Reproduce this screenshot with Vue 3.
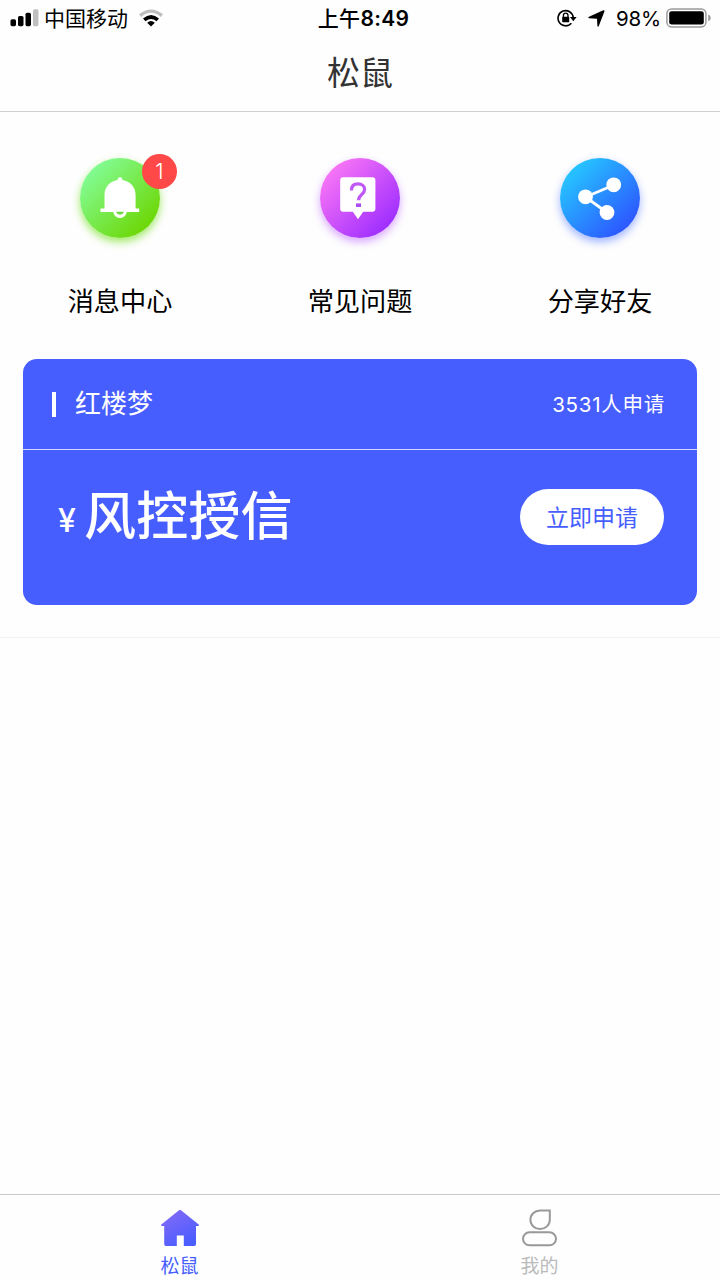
<template>
  <div class="page">
    <header class="status-bar">
      <div class="status-left">
        <svg class="signal" width="29" height="18" viewBox="0 0 29 18">
          <rect x="0.5" y="10.2" width="5.5" height="7" rx="1.6" />
          <rect x="8" y="7" width="5.5" height="10.2" rx="1.6" />
          <rect x="15.5" y="3.7" width="5.5" height="13.5" rx="1.6" />
          <rect x="23" y="0.2" width="5.5" height="17" rx="1.6" fill="#bfbfbf" />
        </svg>
        <span class="carrier">中国移动</span>
        <svg class="wifi" width="24" height="18" viewBox="0 0 24 18">
          <path d="M0 5.2Q12-4.4 24 5.2L21.8 7.9Q12-.2 2.2 7.9z" fill="#bfbfbf" />
          <path d="M4 9.6Q12 2.4 20 9.6L17.5 12.3Q12 7.6 6.5 12.3z" />
          <path d="M8.2 13.8Q12 10.4 15.8 13.8L12 17.6z" />
        </svg>
      </div>
      <div class="time"><span>上午</span>8:49</div>
      <div class="status-right">
        <svg class="lock" width="20" height="18" viewBox="0 0 20 18">
          <path d="M14.4 14.2A7.6 7.6 0 1 1 16.2 8.4" fill="none" stroke="#000" stroke-width="1.6" />
          <path d="M13 8h6.6l-3.3 4.2z" />
          <rect x="5.2" y="7.8" width="7" height="5.4" rx="0.6" />
          <path d="M6.4 8V6.5a2.3 2.3 0 0 1 4.6 0V8" fill="none" stroke="#000" stroke-width="1.3" />
        </svg>
        <svg class="location" width="17" height="17" viewBox="0 0 17 17">
          <path d="M15.3 0.3Q16.8-.1 16.4 1.4L10.8 16Q9.9 17.4 9.4 15.7L9 8.7 1 8.2Q-.4 7.7 1 6.7z" />
        </svg>
        <span class="percent">98%</span>
        <svg class="battery" width="45" height="20" viewBox="0 0 45 20">
          <rect x="0.9" y="0.9" width="39" height="18" rx="4.6" fill="none" stroke="#9b9b9b" stroke-width="1.5" />
          <rect x="3.2" y="3.2" width="34.6" height="13.4" rx="2.4" />
          <path d="M42.2 6.6q2.6 1 2.6 3.3t-2.6 3.3z" fill="#9b9b9b" />
        </svg>
      </div>
    </header>

    <div class="nav-bar">松鼠</div>

    <div class="menu">
      <div v-for="item in menus" :key="item.name" class="menu-item">
        <div class="menu-icon" :class="item.name">
          <svg v-if="item.name === 'message'" width="80" height="80" viewBox="0 0 80 80" fill="#fff">
            <path d="M37.6 21.4q0-2.2 2.4-2.2t2.4 2.2v.5c8 1.2 13.2 7.2 13.2 15V50.5H59.2V54H20.5V50.5h4V36.9c0-7.8 5.2-13.8 13.1-15z" />
            <path d="M33.2 53a6.8 7 0 0 0 13.6 0z" />
            <path d="M36 53.8h8q-1.2 2.9-4 2.9t-4-2.9z" fill="#68d83c" />
          </svg>
          <svg v-else-if="item.name === 'question'" width="80" height="80" viewBox="0 0 80 80">
            <path d="M23.2 19.2h29.2a3 3 0 0 1 3 3v28.6a3 3 0 0 1-3 3h-9.2L38 61.3l-5.2-7.5h-9.6a3 3 0 0 1-3-3V22.2a3 3 0 0 1 3-3z" fill="#fff" />
            <path d="M31.4 32.6c0-4.8 2.6-6.8 6.6-6.8s6.6 2.2 6.6 5.8c0 5-6 5-6 10.6" fill="none" stroke="#bf58f5" stroke-width="3.2" />
            <rect x="36" y="45.4" width="5" height="3.6" fill="#b04cf5" />
          </svg>
          <svg v-else width="80" height="80" viewBox="0 0 80 80" fill="#fff">
            <path d="M54 27L25.5 39 47 54.5" fill="none" stroke="#fff" stroke-width="2.8" />
            <circle cx="53.7" cy="26.8" r="7.4" />
            <circle cx="25.5" cy="38.8" r="7.4" />
            <circle cx="47" cy="54.5" r="7.4" />
          </svg>
          <span v-if="item.badge" class="badge">{{ item.badge }}</span>
        </div>
        <div class="menu-text">{{ item.text }}</div>
      </div>
    </div>

    <div class="card-wrap">
      <div class="card">
        <div class="card-head">
          <div class="card-title">红楼梦</div>
          <div class="card-count">3531人申请</div>
        </div>
        <div class="card-body">
          <div class="amount"><span class="unit">¥</span><span>风控授信</span></div>
          <button class="apply">立即申请</button>
        </div>
      </div>
    </div>

    <footer class="tab-bar">
      <div class="tab" :class="{ active: current === 0 }" @click="current = 0">
        <svg width="40" height="38" viewBox="0 0 40 38">
          <defs>
            <linearGradient id="home" x1="0" y1="0" x2="0.6" y2="1">
              <stop offset="0" stop-color="#8a6cf6" />
              <stop offset="1" stop-color="#4a5dff" />
            </linearGradient>
          </defs>
          <path d="M19 1.2q1-.8 2 0L38.7 15.6q.9 1.2-.5 1.3H36v18.3q0 1.8-1.8 1.8H23.8V26.5h-7V37H6q-1.8 0-1.8-1.8V16.9H1.8q-1.4-.1-.5-1.3z" fill="url(#home)" />
        </svg>
        <span>松鼠</span>
      </div>
      <div class="tab" :class="{ active: current === 1 }" @click="current = 1">
        <svg width="40" height="38" viewBox="0 0 40 38" fill="none" stroke="#999" stroke-width="2">
          <path d="M29.8 1.5H20a9.7 9.3 0 1 0 9.8 9.3z" />
          <rect x="3" y="23.3" width="33" height="13" rx="6.5" />
        </svg>
        <span>我的</span>
      </div>
    </footer>
  </div>
</template>

<script setup>
import { ref } from 'vue'

const current = ref(0)

const menus = [
  { name: 'message', text: '消息中心', badge: 1 },
  { name: 'question', text: '常见问题' },
  { name: 'share', text: '分享好友' }
]
</script>

<style>
body {
  background: #fff;
}
</style>

<style scoped>
.page {
  display: flex;
  flex-direction: column;
  height: 1280px;
  overflow: hidden;
  box-sizing: border-box;
  background: #fefefe;
  color: #000;
  font-family: Inter, "Noto Sans CJK SC", sans-serif;
}

.page svg {
  display: block;
  flex: none;
}

/* 状态栏 */
.status-bar {
  display: flex;
  justify-content: space-between;
  height: 37px;
  padding: 0 9px 0 10px;
  font-size: 21px;
  line-height: 37px;
}

.status-left,
.status-right {
  display: flex;
  align-items: center;
  flex: 1;
}

.status-right {
  justify-content: flex-end;
}

.signal {
  margin-bottom: 1px;
}

.carrier {
  margin-left: 5px;
}

.wifi {
  margin: 0 0 1px 11px;
}

.time {
  padding-left: 6px;
  font-weight: 600;
  letter-spacing: 0.3px;
}

.time span {
  font-weight: 500;
}

.lock,
.location,
.battery {
  margin-bottom: 1px;
}

.location {
  margin-left: 11px;
}

.percent {
  margin: 0 5px 0 11px;
  font-size: 20.5px;
  letter-spacing: -0.2px;
}

/* 标题栏 */
.nav-bar {
  height: 74px;
  border-bottom: 1px solid #d0d0d0;
  color: #333;
  font-size: 33px;
  line-height: 72px;
  text-align: center;
}

/* 菜单 */
.menu {
  display: flex;
  padding-top: 46px;
  height: 201px;
}

.menu-item {
  display: flex;
  flex: 1;
  flex-direction: column;
  align-items: center;
}

.menu-icon {
  position: relative;
  width: 80px;
  height: 80px;
  border-radius: 50%;
}

.message {
  background: linear-gradient(135deg, #84ffa0 8%, #6cd600 88%);
  box-shadow: 0 4px 9px rgba(108, 222, 20, 0.65);
}

.question {
  background: linear-gradient(135deg, #ff7af5 8%, #9c2cff 88%);
  box-shadow: 0 4px 9px rgba(170, 60, 255, 0.45);
}

.share {
  background: linear-gradient(135deg, #25ceff 8%, #2d53ff 88%);
  box-shadow: 0 4px 9px rgba(45, 90, 255, 0.45);
}

.badge {
  position: absolute;
  top: -4px;
  right: -17px;
  width: 35px;
  height: 35px;
  border-radius: 50%;
  background: #ff4848;
  color: #fff;
  font-size: 21px;
  font-weight: 300;
  line-height: 35px;
  text-align: center;
}

.menu-text {
  margin-top: 44px;
  font-size: 26.2px;
  line-height: 40px;
}

/* 卡片 */
.card-wrap {
  padding: 0 23px 32px;
  border-bottom: 1px solid #f3f3f3;
}

.card {
  height: 246px;
  border-radius: 14px;
  background: #475eff;
  color: #fff;
}

.card-head {
  display: flex;
  align-items: center;
  justify-content: space-between;
  height: 90px;
  padding: 0 32px 0 29px;
  border-bottom: 1px solid #d4d9ff;
}

.card-title {
  display: flex;
  align-items: center;
  font-size: 26px;
  line-height: 38px;
}

.card-title::before {
  content: "";
  width: 4px;
  height: 25px;
  margin-right: 19px;
  background: #fff;
}

.card-count {
  padding-bottom: 2px;
  font-size: 20.5px;
  letter-spacing: 0.75px;
}

.card-body {
  display: flex;
  justify-content: space-between;
  padding: 25px 33px 0 35px;
}

.amount {
  display: flex;
  font-size: 52px;
  font-weight: 500;
  line-height: 84px;
  letter-spacing: 0.2px;
}

.unit {
  margin-right: 8px;
  padding-top: 4px;
  font-size: 32px;
}

.apply {
  width: 144px;
  height: 56px;
  margin-top: 14px;
  padding: 0 0 2px;
  border: 0;
  border-radius: 28px;
  background: #fff;
  color: #475eff;
  font-family: inherit;
  font-size: 23px;
}

/* 底部导航 */
.tab-bar {
  display: flex;
  height: 86px;
  box-sizing: border-box;
  margin-top: auto;
  border-top: 1px solid #c8c8c8;
}

.tab {
  display: flex;
  flex: 1;
  flex-direction: column;
  align-items: center;
  padding: 14px 1px 0 0;
  color: #bbb;
  font-size: 19px;
  line-height: 40px;
}

.tab.active {
  color: #475eff;
}
</style>
